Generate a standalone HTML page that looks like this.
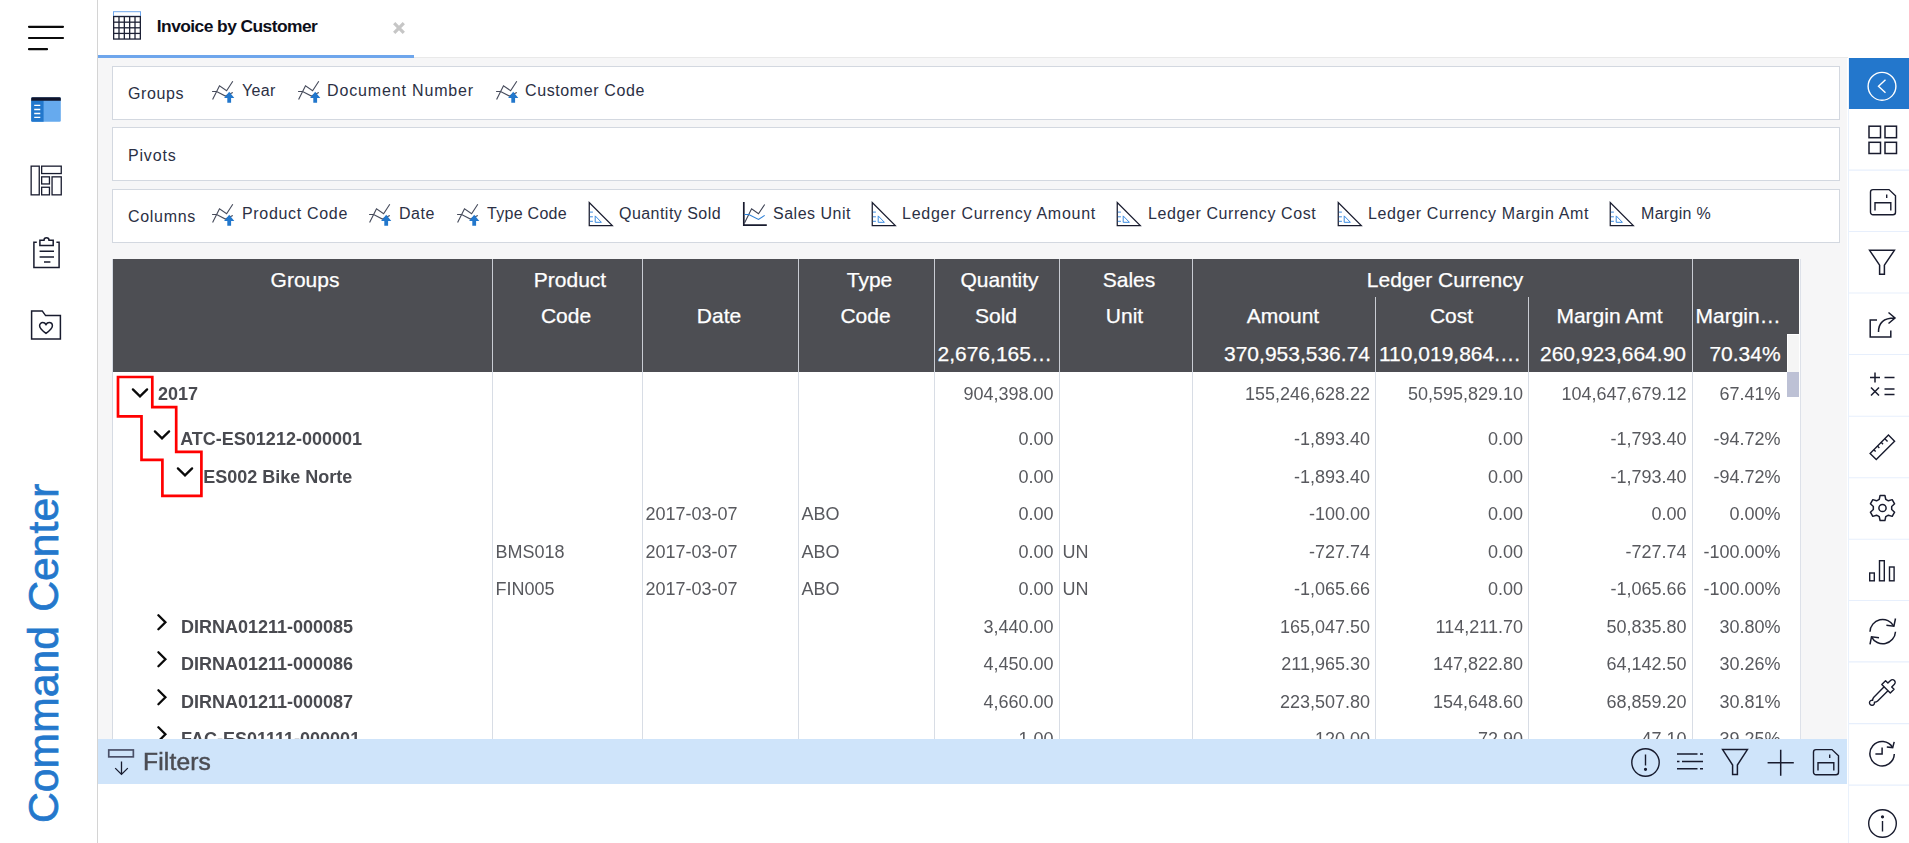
<!DOCTYPE html>
<html lang="en"><head><meta charset="utf-8"><title>Invoice by Customer</title>
<style>
html,body{margin:0;padding:0;}
body{width:1909px;height:843px;overflow:hidden;position:relative;background:#fff;font-family:"Liberation Sans",sans-serif;}
.r{position:absolute;display:block;}
.t{position:absolute;white-space:pre;display:block;}
#clip{position:absolute;left:113px;top:372px;width:1687px;height:367px;overflow:hidden;background:#fff;will-change:transform;}
</style></head><body>
<div class="r" style="left:98px;top:0px;width:1811px;height:58px;background:#fff;"></div>
<div class="r" style="left:98px;top:58px;width:1749px;height:681px;background:#f6f6f7;"></div>
<div class="r" style="left:98px;top:57px;width:1750px;height:1px;background:#e9e9e9;"></div>
<div class="r" style="left:98px;top:55px;width:316px;height:3px;background:#6ea6ec;"></div>
<div class="r" style="left:97px;top:0px;width:1px;height:843px;background:#d4d4d4;"></div>
<svg class="r" style="left:24px;top:20px;" width="44" height="36" viewBox="0 0 44 36" fill="none"><g stroke="#0b0b0b" stroke-width="2.200" stroke-linecap="round"><path d="M5 6.8H39M5 18H39M5 29.2H23"/></g></svg>
<svg class="r" style="left:30px;top:96px;" width="32" height="27" viewBox="0 0 32 27" fill="none"><rect x="1.200" y="1.200" width="29.600" height="24.500" rx="1.300" fill="#66aaee"/><path d="M1.200 4.500h12.400v21.200H2.500a1.300 1.300 0 0 1 -1.300 -1.300z" fill="#2277cc"/><path d="M1.200 2.500a1.300 1.300 0 0 1 1.300-1.300h27a1.300 1.300 0 0 1 1.300 1.300v2.300H1.200z" fill="#11142a"/><path d="M4.200 9.400h6.100M4.200 13.500h6.100M4.200 17.500h6.100M4.200 21.400h6.100" stroke="#fff" stroke-width="1.300"/></svg>
<svg class="r" style="left:29px;top:164px;" width="34" height="33" viewBox="0 0 34 33" fill="none"><g stroke="#181b2e" stroke-width="1.300"><rect x="2.150" y="2.150" width="8.100" height="28.700"/><rect x="12.650" y="2.150" width="19.600" height="7.400"/><rect x="12.650" y="12.850" width="7.800" height="7.100"/><rect x="12.650" y="23.250" width="7.800" height="7.600"/><rect x="23.050" y="12.850" width="9.200" height="18"/></g></svg>
<svg class="r" style="left:31px;top:235px;" width="31" height="35" viewBox="0 0 31 35" fill="none"><g stroke="#181b2e" stroke-width="1.5"><path d="M5.800 7.200H2.900V32.400H28.100V7.200H25.400"/><path d="M8.900 5.200h4.100a2.500 2.500 0 0 1 5 0h4.200v5.400H8.900z"/><path d="M8.6 16.2h14.4M8.6 22h14.4M13 26.9h6.4"/></g></svg>
<svg class="r" style="left:29px;top:308px;" width="34" height="34" viewBox="0 0 34 34" fill="none"><g stroke="#181b2e" stroke-width="1.5"><path d="M2.6 2.9H13.2L16.6 7.6H31.4V31.1H2.6z"/><path d="M17 25.4c-3-2.2-6.4-4.7-6.4-7.6 0-1.9 1.4-3.3 3.2-3.3 1.4 0 2.5.8 3.2 2 .7-1.2 1.8-2 3.2-2 1.8 0 3.2 1.4 3.2 3.3 0 2.9-3.4 5.400-6.4 7.6z"/></g></svg>
<div class="t" style="left:0;top:0;width:0;height:0;"><span class="t" style="left:65px;top:822.5px;transform-origin:0 0;transform:rotate(-90deg) translate(0,-100%);font-size:42.700px;line-height:43px;word-spacing:2.500px;color:#2478cc;-webkit-text-stroke:0.7px #2478cc;letter-spacing:0px;">Command Center</span></div>
<svg class="r" style="left:113px;top:11px;" width="28" height="29" viewBox="0 0 28 29" fill="none"><rect x="0.500" y="0.700" width="27" height="4.600" stroke="#6ea6ec" stroke-width="1" fill="#fff"/><rect x="0" y="4.900" width="28" height="23.800" fill="#1d2135"/><rect x="1.30" y="6.20" width="4.040" height="4.325" fill="#fff"/><rect x="6.64" y="6.20" width="4.040" height="4.325" fill="#fff"/><rect x="11.98" y="6.20" width="4.040" height="4.325" fill="#fff"/><rect x="17.32" y="6.20" width="4.040" height="4.325" fill="#fff"/><rect x="22.66" y="6.20" width="4.040" height="4.325" fill="#fff"/><rect x="1.30" y="11.82" width="4.040" height="4.325" fill="#fff"/><rect x="6.64" y="11.82" width="4.040" height="4.325" fill="#fff"/><rect x="11.98" y="11.82" width="4.040" height="4.325" fill="#fff"/><rect x="17.32" y="11.82" width="4.040" height="4.325" fill="#fff"/><rect x="22.66" y="11.82" width="4.040" height="4.325" fill="#fff"/><rect x="1.30" y="17.45" width="4.040" height="4.325" fill="#fff"/><rect x="6.64" y="17.45" width="4.040" height="4.325" fill="#fff"/><rect x="11.98" y="17.45" width="4.040" height="4.325" fill="#fff"/><rect x="17.32" y="17.45" width="4.040" height="4.325" fill="#fff"/><rect x="22.66" y="17.45" width="4.040" height="4.325" fill="#fff"/><rect x="1.30" y="23.07" width="4.040" height="4.325" fill="#fff"/><rect x="6.64" y="23.07" width="4.040" height="4.325" fill="#fff"/><rect x="11.98" y="23.07" width="4.040" height="4.325" fill="#fff"/><rect x="17.32" y="23.07" width="4.040" height="4.325" fill="#fff"/><rect x="22.66" y="23.07" width="4.040" height="4.325" fill="#fff"/></svg>
<span class="t" style="top:18.27px;font-size:17.4px;line-height:17.4px;color:#0e0f1a;font-weight:700;letter-spacing:-0.560px;left:156.80px;">Invoice by Customer</span>
<svg class="r" style="left:392px;top:21px;" width="14" height="14" viewBox="0 0 14 14" fill="none"><path d="M2.2 2.2L11.8 11.800M11.8 2.2L2.2 11.800" stroke="#c6c6c6" stroke-width="3.2"/></svg>
<div class="r" style="left:112px;top:66px;width:1726px;height:52px;background:#fff;border:1px solid #d3d8e0;"></div>
<div class="r" style="left:112px;top:127px;width:1726px;height:52px;background:#fff;border:1px solid #d3d8e0;"></div>
<div class="r" style="left:112px;top:189px;width:1726px;height:52px;background:#fff;border:1px solid #d3d8e0;"></div>
<span class="t" style="top:86.46px;font-size:16px;line-height:16px;color:#2b3044;letter-spacing:0.588px;left:128.00px;">Groups</span>
<span class="t" style="top:148.46px;font-size:16px;line-height:16px;color:#2b3044;letter-spacing:0.822px;left:128.00px;">Pivots</span>
<span class="t" style="top:209.46px;font-size:16px;line-height:16px;color:#2b3044;letter-spacing:0.695px;left:128.00px;">Columns</span>
<svg class="r" style="left:212px;top:79.8px;" width="24" height="24" viewBox="0 0 24 24" fill="none"><g stroke="#474c5c" stroke-width="1.15" fill="none"><path d="M0.6 19.5L7.5 5.8L14.6 10.700L20.800 1.3"/><path d="M0.1 11.5H4.6L13.4 16L20.800 12.4"/></g><path d="M17.2 11.700L22.3 18.1H19.1V22.800H15.300V18.1H12.100z" fill="#2277cc"/></svg>
<span class="t" style="top:83.46px;font-size:16px;line-height:16px;color:#2b3044;letter-spacing:0.293px;left:242.00px;">Year</span>
<svg class="r" style="left:297.5px;top:79.8px;" width="24" height="24" viewBox="0 0 24 24" fill="none"><g stroke="#474c5c" stroke-width="1.15" fill="none"><path d="M0.6 19.5L7.5 5.8L14.6 10.700L20.800 1.3"/><path d="M0.1 11.5H4.6L13.4 16L20.800 12.4"/></g><path d="M17.2 11.700L22.3 18.1H19.1V22.800H15.300V18.1H12.100z" fill="#2277cc"/></svg>
<span class="t" style="top:83.46px;font-size:16px;line-height:16px;color:#2b3044;letter-spacing:0.848px;left:327.00px;">Document Number</span>
<svg class="r" style="left:495.5px;top:79.8px;" width="24" height="24" viewBox="0 0 24 24" fill="none"><g stroke="#474c5c" stroke-width="1.15" fill="none"><path d="M0.6 19.5L7.5 5.8L14.6 10.700L20.800 1.3"/><path d="M0.1 11.5H4.6L13.4 16L20.800 12.4"/></g><path d="M17.2 11.700L22.3 18.1H19.1V22.800H15.300V18.1H12.100z" fill="#2277cc"/></svg>
<span class="t" style="top:83.46px;font-size:16px;line-height:16px;color:#2b3044;letter-spacing:0.612px;left:525.00px;">Customer Code</span>
<svg class="r" style="left:212px;top:203.2px;" width="24" height="24" viewBox="0 0 24 24" fill="none"><g stroke="#474c5c" stroke-width="1.15" fill="none"><path d="M0.6 19.5L7.5 5.8L14.6 10.700L20.800 1.3"/><path d="M0.1 11.5H4.6L13.4 16L20.800 12.4"/></g><path d="M17.2 11.700L22.3 18.1H19.1V22.800H15.300V18.1H12.100z" fill="#2277cc"/></svg>
<span class="t" style="top:206.46px;font-size:16px;line-height:16px;color:#2b3044;letter-spacing:0.680px;left:242.00px;">Product Code</span>
<svg class="r" style="left:369px;top:203.2px;" width="24" height="24" viewBox="0 0 24 24" fill="none"><g stroke="#474c5c" stroke-width="1.15" fill="none"><path d="M0.6 19.5L7.5 5.8L14.6 10.700L20.800 1.3"/><path d="M0.1 11.5H4.6L13.4 16L20.800 12.4"/></g><path d="M17.2 11.700L22.3 18.1H19.1V22.800H15.300V18.1H12.100z" fill="#2277cc"/></svg>
<span class="t" style="top:206.46px;font-size:16px;line-height:16px;color:#2b3044;letter-spacing:0.551px;left:399.00px;">Date</span>
<svg class="r" style="left:457px;top:203.2px;" width="24" height="24" viewBox="0 0 24 24" fill="none"><g stroke="#474c5c" stroke-width="1.15" fill="none"><path d="M0.6 19.5L7.5 5.8L14.6 10.700L20.800 1.3"/><path d="M0.1 11.5H4.6L13.4 16L20.800 12.4"/></g><path d="M17.2 11.700L22.3 18.1H19.1V22.800H15.300V18.1H12.100z" fill="#2277cc"/></svg>
<span class="t" style="top:206.46px;font-size:16px;line-height:16px;color:#2b3044;letter-spacing:0.291px;left:487.00px;">Type Code</span>
<svg class="r" style="left:588px;top:201px;" width="26" height="27" viewBox="0 0 26 27" fill="none"><path d="M1.25 1.6V24.600H24.300z" stroke="#181b2e" stroke-width="1.25" fill="#fff" stroke-linejoin="miter"/><path d="M7.2 14.9V21.300H13.400z" stroke="#3b8be0" stroke-width="1" fill="none"/><path d="M1.9 11.100H4.900M1.900 15.800H4.900M1.900 20.300H4.900" stroke="#3b8be0" stroke-width="1"/></svg>
<span class="t" style="top:206.46px;font-size:16px;line-height:16px;color:#2b3044;letter-spacing:0.457px;left:619.00px;">Quantity Sold</span>
<svg class="r" style="left:742px;top:202px;" width="26" height="26" viewBox="0 0 26 26" fill="none"><path d="M1.8 0.1V23.100H24.800" stroke="#181b2e" stroke-width="1.7" fill="none"/><path d="M2.5 21L9.600 6.800L16.500 11.700L22.700 2.500" stroke="#3c4052" stroke-width="1.1" fill="none"/><path d="M2.5 12.500H6.800L16.500 17.400L22.700 13.400" stroke="#2b7fd6" stroke-width="1.1" fill="none"/></svg>
<span class="t" style="top:206.46px;font-size:16px;line-height:16px;color:#2b3044;letter-spacing:0.508px;left:773.00px;">Sales Unit</span>
<svg class="r" style="left:871px;top:201px;" width="26" height="27" viewBox="0 0 26 27" fill="none"><path d="M1.25 1.6V24.600H24.300z" stroke="#181b2e" stroke-width="1.25" fill="#fff" stroke-linejoin="miter"/><path d="M7.2 14.9V21.300H13.400z" stroke="#3b8be0" stroke-width="1" fill="none"/><path d="M1.9 11.100H4.900M1.900 15.800H4.900M1.900 20.300H4.900" stroke="#3b8be0" stroke-width="1"/></svg>
<span class="t" style="top:206.46px;font-size:16px;line-height:16px;color:#2b3044;letter-spacing:0.733px;left:902.00px;">Ledger Currency Amount</span>
<svg class="r" style="left:1116px;top:201px;" width="26" height="27" viewBox="0 0 26 27" fill="none"><path d="M1.25 1.6V24.600H24.300z" stroke="#181b2e" stroke-width="1.25" fill="#fff" stroke-linejoin="miter"/><path d="M7.2 14.9V21.300H13.400z" stroke="#3b8be0" stroke-width="1" fill="none"/><path d="M1.9 11.100H4.900M1.900 15.800H4.900M1.900 20.300H4.900" stroke="#3b8be0" stroke-width="1"/></svg>
<span class="t" style="top:206.46px;font-size:16px;line-height:16px;color:#2b3044;letter-spacing:0.589px;left:1148.00px;">Ledger Currency Cost</span>
<svg class="r" style="left:1337px;top:201px;" width="26" height="27" viewBox="0 0 26 27" fill="none"><path d="M1.25 1.6V24.600H24.300z" stroke="#181b2e" stroke-width="1.25" fill="#fff" stroke-linejoin="miter"/><path d="M7.2 14.9V21.300H13.400z" stroke="#3b8be0" stroke-width="1" fill="none"/><path d="M1.9 11.100H4.900M1.900 15.800H4.900M1.900 20.300H4.900" stroke="#3b8be0" stroke-width="1"/></svg>
<span class="t" style="top:206.46px;font-size:16px;line-height:16px;color:#2b3044;letter-spacing:0.633px;left:1368.00px;">Ledger Currency Margin Amt</span>
<svg class="r" style="left:1609px;top:201px;" width="26" height="27" viewBox="0 0 26 27" fill="none"><path d="M1.25 1.6V24.600H24.300z" stroke="#181b2e" stroke-width="1.25" fill="#fff" stroke-linejoin="miter"/><path d="M7.2 14.9V21.300H13.400z" stroke="#3b8be0" stroke-width="1" fill="none"/><path d="M1.9 11.100H4.900M1.900 15.800H4.900M1.900 20.300H4.900" stroke="#3b8be0" stroke-width="1"/></svg>
<span class="t" style="top:206.46px;font-size:16px;line-height:16px;color:#2b3044;letter-spacing:0.303px;left:1641.00px;">Margin %</span>
<div class="r" style="left:112px;top:259px;width:1px;height:480px;background:#d6dbe3;"></div>
<div class="r" style="left:113px;top:259px;width:1686px;height:113px;background:#4d4e53;"></div>
<div class="r" style="left:1799px;top:259px;width:1px;height:480px;background:#fff;"></div>
<div class="r" style="left:1800px;top:259px;width:1px;height:480px;background:#dde1e9;"></div>
<div id="clip">
<div class="r" style="left:379px;top:0px;width:1px;height:367px;background:#d8dde5;"></div>
<div class="r" style="left:529px;top:0px;width:1px;height:367px;background:#d8dde5;"></div>
<div class="r" style="left:685px;top:0px;width:1px;height:367px;background:#d8dde5;"></div>
<div class="r" style="left:821px;top:0px;width:1px;height:367px;background:#d8dde5;"></div>
<div class="r" style="left:946px;top:0px;width:1px;height:367px;background:#d8dde5;"></div>
<div class="r" style="left:1079px;top:0px;width:1px;height:367px;background:#d8dde5;"></div>
<div class="r" style="left:1262px;top:0px;width:1px;height:367px;background:#d8dde5;"></div>
<div class="r" style="left:1415px;top:0px;width:1px;height:367px;background:#d8dde5;"></div>
<div class="r" style="left:1579px;top:0px;width:1px;height:367px;background:#d8dde5;"></div>
<span class="t" style="top:12.76px;font-size:18px;line-height:18px;color:#494a50;font-weight:700;left:45.00px;">2017</span>
<span class="t" style="top:12.76px;font-size:18px;line-height:18px;color:#58595e;left:850.51px;">904,398.00</span>
<span class="t" style="top:12.76px;font-size:18px;line-height:18px;color:#58595e;left:1131.88px;">155,246,628.22</span>
<span class="t" style="top:12.76px;font-size:18px;line-height:18px;color:#58595e;left:1294.89px;">50,595,829.10</span>
<span class="t" style="top:12.76px;font-size:18px;line-height:18px;color:#58595e;left:1448.48px;">104,647,679.12</span>
<span class="t" style="top:12.76px;font-size:18px;line-height:18px;color:#58595e;left:1606.55px;">67.41%</span>
<span class="t" style="top:57.76px;font-size:18px;line-height:18px;color:#494a50;font-weight:700;left:67.20px;">ATC-ES01212-000001</span>
<span class="t" style="top:57.76px;font-size:18px;line-height:18px;color:#58595e;left:905.57px;">0.00</span>
<span class="t" style="top:57.76px;font-size:18px;line-height:18px;color:#58595e;left:1180.94px;">-1,893.40</span>
<span class="t" style="top:57.76px;font-size:18px;line-height:18px;color:#58595e;left:1374.97px;">0.00</span>
<span class="t" style="top:57.76px;font-size:18px;line-height:18px;color:#58595e;left:1497.54px;">-1,793.40</span>
<span class="t" style="top:57.76px;font-size:18px;line-height:18px;color:#58595e;left:1600.56px;">-94.72%</span>
<span class="t" style="top:95.76px;font-size:18px;line-height:18px;color:#494a50;font-weight:700;left:90.20px;">ES002 Bike Norte</span>
<span class="t" style="top:95.76px;font-size:18px;line-height:18px;color:#58595e;left:905.57px;">0.00</span>
<span class="t" style="top:95.76px;font-size:18px;line-height:18px;color:#58595e;left:1180.94px;">-1,893.40</span>
<span class="t" style="top:95.76px;font-size:18px;line-height:18px;color:#58595e;left:1374.97px;">0.00</span>
<span class="t" style="top:95.76px;font-size:18px;line-height:18px;color:#58595e;left:1497.54px;">-1,793.40</span>
<span class="t" style="top:95.76px;font-size:18px;line-height:18px;color:#58595e;left:1600.56px;">-94.72%</span>
<span class="t" style="top:132.76px;font-size:18px;line-height:18px;color:#58595e;left:532.50px;">2017-03-07</span>
<span class="t" style="top:132.76px;font-size:18px;line-height:18px;color:#58595e;left:688.50px;">ABO</span>
<span class="t" style="top:132.76px;font-size:18px;line-height:18px;color:#58595e;left:905.57px;">0.00</span>
<span class="t" style="top:132.76px;font-size:18px;line-height:18px;color:#58595e;left:1195.95px;">-100.00</span>
<span class="t" style="top:132.76px;font-size:18px;line-height:18px;color:#58595e;left:1374.97px;">0.00</span>
<span class="t" style="top:132.76px;font-size:18px;line-height:18px;color:#58595e;left:1538.57px;">0.00</span>
<span class="t" style="top:132.76px;font-size:18px;line-height:18px;color:#58595e;left:1616.56px;">0.00%</span>
<span class="t" style="top:170.76px;font-size:18px;line-height:18px;color:#58595e;left:382.50px;">BMS018</span>
<span class="t" style="top:170.76px;font-size:18px;line-height:18px;color:#58595e;left:532.50px;">2017-03-07</span>
<span class="t" style="top:170.76px;font-size:18px;line-height:18px;color:#58595e;left:688.50px;">ABO</span>
<span class="t" style="top:170.76px;font-size:18px;line-height:18px;color:#58595e;left:905.57px;">0.00</span>
<span class="t" style="top:170.76px;font-size:18px;line-height:18px;color:#58595e;left:949.50px;">UN</span>
<span class="t" style="top:170.76px;font-size:18px;line-height:18px;color:#58595e;left:1195.95px;">-727.74</span>
<span class="t" style="top:170.76px;font-size:18px;line-height:18px;color:#58595e;left:1374.97px;">0.00</span>
<span class="t" style="top:170.76px;font-size:18px;line-height:18px;color:#58595e;left:1512.55px;">-727.74</span>
<span class="t" style="top:170.76px;font-size:18px;line-height:18px;color:#58595e;left:1590.55px;">-100.00%</span>
<span class="t" style="top:207.76px;font-size:18px;line-height:18px;color:#58595e;left:382.50px;">FIN005</span>
<span class="t" style="top:207.76px;font-size:18px;line-height:18px;color:#58595e;left:532.50px;">2017-03-07</span>
<span class="t" style="top:207.76px;font-size:18px;line-height:18px;color:#58595e;left:688.50px;">ABO</span>
<span class="t" style="top:207.76px;font-size:18px;line-height:18px;color:#58595e;left:905.57px;">0.00</span>
<span class="t" style="top:207.76px;font-size:18px;line-height:18px;color:#58595e;left:949.50px;">UN</span>
<span class="t" style="top:207.76px;font-size:18px;line-height:18px;color:#58595e;left:1180.94px;">-1,065.66</span>
<span class="t" style="top:207.76px;font-size:18px;line-height:18px;color:#58595e;left:1374.97px;">0.00</span>
<span class="t" style="top:207.76px;font-size:18px;line-height:18px;color:#58595e;left:1497.54px;">-1,065.66</span>
<span class="t" style="top:207.76px;font-size:18px;line-height:18px;color:#58595e;left:1590.55px;">-100.00%</span>
<span class="t" style="top:245.76px;font-size:18px;line-height:18px;color:#494a50;font-weight:700;left:68.00px;">DIRNA01211-000085</span>
<svg class="r" style="left:41px;top:240px;" width="16" height="22" viewBox="0 0 16 22" fill="none"><path d="M4.400 3.300L11.400 10.300L4.400 17.300" stroke="#0a0a0a" stroke-width="2.300" stroke-linecap="round"/></svg>
<span class="t" style="top:245.76px;font-size:18px;line-height:18px;color:#58595e;left:870.53px;">3,440.00</span>
<span class="t" style="top:245.76px;font-size:18px;line-height:18px;color:#58595e;left:1166.91px;">165,047.50</span>
<span class="t" style="top:245.76px;font-size:18px;line-height:18px;color:#58595e;left:1322.58px;">114,211.70</span>
<span class="t" style="top:245.76px;font-size:18px;line-height:18px;color:#58595e;left:1493.52px;">50,835.80</span>
<span class="t" style="top:245.76px;font-size:18px;line-height:18px;color:#58595e;left:1606.55px;">30.80%</span>
<span class="t" style="top:282.76px;font-size:18px;line-height:18px;color:#494a50;font-weight:700;left:68.00px;">DIRNA01211-000086</span>
<svg class="r" style="left:41px;top:277px;" width="16" height="22" viewBox="0 0 16 22" fill="none"><path d="M4.400 3.300L11.400 10.300L4.400 17.300" stroke="#0a0a0a" stroke-width="2.300" stroke-linecap="round"/></svg>
<span class="t" style="top:282.76px;font-size:18px;line-height:18px;color:#58595e;left:870.53px;">4,450.00</span>
<span class="t" style="top:282.76px;font-size:18px;line-height:18px;color:#58595e;left:1168.25px;">211,965.30</span>
<span class="t" style="top:282.76px;font-size:18px;line-height:18px;color:#58595e;left:1319.91px;">147,822.80</span>
<span class="t" style="top:282.76px;font-size:18px;line-height:18px;color:#58595e;left:1493.52px;">64,142.50</span>
<span class="t" style="top:282.76px;font-size:18px;line-height:18px;color:#58595e;left:1606.55px;">30.26%</span>
<span class="t" style="top:320.76px;font-size:18px;line-height:18px;color:#494a50;font-weight:700;left:68.00px;">DIRNA01211-000087</span>
<svg class="r" style="left:41px;top:315px;" width="16" height="22" viewBox="0 0 16 22" fill="none"><path d="M4.400 3.300L11.400 10.300L4.400 17.300" stroke="#0a0a0a" stroke-width="2.300" stroke-linecap="round"/></svg>
<span class="t" style="top:320.76px;font-size:18px;line-height:18px;color:#58595e;left:870.53px;">4,660.00</span>
<span class="t" style="top:320.76px;font-size:18px;line-height:18px;color:#58595e;left:1166.91px;">223,507.80</span>
<span class="t" style="top:320.76px;font-size:18px;line-height:18px;color:#58595e;left:1319.91px;">154,648.60</span>
<span class="t" style="top:320.76px;font-size:18px;line-height:18px;color:#58595e;left:1493.52px;">68,859.20</span>
<span class="t" style="top:320.76px;font-size:18px;line-height:18px;color:#58595e;left:1606.55px;">30.81%</span>
<span class="t" style="top:357.76px;font-size:18px;line-height:18px;color:#494a50;font-weight:700;left:68.00px;">FAC-ES01111-000001</span>
<svg class="r" style="left:41px;top:352px;" width="16" height="22" viewBox="0 0 16 22" fill="none"><path d="M4.400 3.300L11.400 10.300L4.400 17.300" stroke="#0a0a0a" stroke-width="2.300" stroke-linecap="round"/></svg>
<span class="t" style="top:357.76px;font-size:18px;line-height:18px;color:#58595e;left:905.57px;">1.00</span>
<span class="t" style="top:357.76px;font-size:18px;line-height:18px;color:#58595e;left:1201.95px;">120.00</span>
<span class="t" style="top:357.76px;font-size:18px;line-height:18px;color:#58595e;left:1364.96px;">72.90</span>
<span class="t" style="top:357.76px;font-size:18px;line-height:18px;color:#58595e;left:1528.56px;">47.10</span>
<span class="t" style="top:357.76px;font-size:18px;line-height:18px;color:#58595e;left:1606.55px;">39.25%</span>
<svg class="r" style="left:15.5px;top:14px;" width="22" height="14" viewBox="0 0 22 14" fill="none"><path d="M3.900 3.400L11 10.400L18.100 3.400" stroke="#0a0a0a" stroke-width="2.300" stroke-linecap="round"/></svg>
<svg class="r" style="left:38.30000000000001px;top:55.69999999999999px;" width="22" height="14" viewBox="0 0 22 14" fill="none"><path d="M3.900 3.400L11 10.400L18.100 3.400" stroke="#0a0a0a" stroke-width="2.300" stroke-linecap="round"/></svg>
<svg class="r" style="left:60.69999999999999px;top:93px;" width="22" height="14" viewBox="0 0 22 14" fill="none"><path d="M3.900 3.400L11 10.400L18.100 3.400" stroke="#0a0a0a" stroke-width="2.300" stroke-linecap="round"/></svg>
<svg class="r" style="left:0px;top:0px;" width="120" height="140" viewBox="0 0 120 140" fill="none"><path d="M5.0 5.0L39.3 5.0L39.3 35.2L63.2 35.2L63.2 79.8L88.4 79.8L88.4 123.8L49.4 123.8L49.4 87.8L28.5 87.8L28.5 44.4L5.0 44.4z" stroke="#f00" stroke-width="2.7" stroke-linejoin="miter"/></svg>
<div class="r" style="left:1674px;top:0px;width:12px;height:25px;background:#bdc1d5;"></div>
</div>
<div class="r" style="left:492px;top:259px;width:1px;height:113px;background:#c9ccd3;"></div>
<div class="r" style="left:642px;top:259px;width:1px;height:113px;background:#c9ccd3;"></div>
<div class="r" style="left:798px;top:259px;width:1px;height:113px;background:#c9ccd3;"></div>
<div class="r" style="left:934px;top:259px;width:1px;height:113px;background:#c9ccd3;"></div>
<div class="r" style="left:1059px;top:259px;width:1px;height:113px;background:#c9ccd3;"></div>
<div class="r" style="left:1192px;top:259px;width:1px;height:113px;background:#c9ccd3;"></div>
<div class="r" style="left:1692px;top:259px;width:1px;height:113px;background:#c9ccd3;"></div>
<div class="r" style="left:1375px;top:297px;width:1px;height:75px;background:#c9ccd3;"></div>
<div class="r" style="left:1528px;top:297px;width:1px;height:75px;background:#c9ccd3;"></div>
<div class="r" style="left:1787px;top:334px;width:12px;height:38px;background:#fff;"></div>
<div class="r" style="left:1788px;top:335px;width:11px;height:37px;background:#f5f5f5;"></div>
<span class="t" style="top:269.22px;font-size:21px;line-height:21px;color:#fff;left:270.57px;-webkit-text-stroke:0.250px #fff;">Groups</span>
<span class="t" style="top:269.22px;font-size:21px;line-height:21px;color:#fff;left:533.81px;-webkit-text-stroke:0.250px #fff;">Product</span>
<span class="t" style="top:305.22px;font-size:21px;line-height:21px;color:#fff;left:540.90px;-webkit-text-stroke:0.250px #fff;">Code</span>
<span class="t" style="top:305.22px;font-size:21px;line-height:21px;color:#fff;left:696.82px;-webkit-text-stroke:0.250px #fff;">Date</span>
<span class="t" style="top:269.22px;font-size:21px;line-height:21px;color:#fff;left:846.74px;-webkit-text-stroke:0.250px #fff;">Type</span>
<span class="t" style="top:305.22px;font-size:21px;line-height:21px;color:#fff;left:840.40px;-webkit-text-stroke:0.250px #fff;">Code</span>
<span class="t" style="top:269.22px;font-size:21px;line-height:21px;color:#fff;left:960.40px;-webkit-text-stroke:0.250px #fff;">Quantity</span>
<span class="t" style="top:305.22px;font-size:21px;line-height:21px;color:#fff;left:974.98px;-webkit-text-stroke:0.250px #fff;">Sold</span>
<span class="t" style="top:269.22px;font-size:21px;line-height:21px;color:#fff;left:1102.73px;-webkit-text-stroke:0.250px #fff;">Sales</span>
<span class="t" style="top:305.22px;font-size:21px;line-height:21px;color:#fff;left:1105.83px;-webkit-text-stroke:0.250px #fff;">Unit</span>
<span class="t" style="top:269.22px;font-size:21px;line-height:21px;color:#fff;left:1366.79px;-webkit-text-stroke:0.250px #fff;">Ledger Currency</span>
<span class="t" style="top:305.22px;font-size:21px;line-height:21px;color:#fff;left:1246.81px;-webkit-text-stroke:0.250px #fff;">Amount</span>
<span class="t" style="top:305.22px;font-size:21px;line-height:21px;color:#fff;left:1429.91px;-webkit-text-stroke:0.250px #fff;">Cost</span>
<span class="t" style="top:305.22px;font-size:21px;line-height:21px;color:#fff;left:1556.40px;-webkit-text-stroke:0.250px #fff;">Margin Amt</span>
<span class="t" style="top:305.22px;font-size:21px;line-height:21px;color:#fff;left:1695.50px;-webkit-text-stroke:0.250px #fff;">Margin…</span>
<span class="t" style="top:343.22px;font-size:21px;line-height:21px;color:#fff;left:937.50px;-webkit-text-stroke:0.250px #fff;">2,676,165…</span>
<span class="t" style="top:343.22px;font-size:21px;line-height:21px;color:#fff;left:1224.02px;-webkit-text-stroke:0.250px #fff;">370,953,536.74</span>
<span class="t" style="top:343.22px;font-size:21px;line-height:21px;color:#fff;left:1379.00px;-webkit-text-stroke:0.250px #fff;">110,019,864.…</span>
<span class="t" style="top:343.22px;font-size:21px;line-height:21px;color:#fff;left:1540.02px;-webkit-text-stroke:0.250px #fff;">260,923,664.90</span>
<span class="t" style="top:343.22px;font-size:21px;line-height:21px;color:#fff;left:1709.38px;-webkit-text-stroke:0.250px #fff;">70.34%</span>
<div class="r" style="left:98px;top:739px;width:1749px;height:45px;background:#cfe4fa;"></div>
<div class="r" style="left:98px;top:784px;width:1750px;height:59px;background:#fff;"></div>
<svg class="r" style="left:106px;top:748px;" width="30" height="28" viewBox="0 0 30 28" fill="none"><rect x="2.750" y="1.950" width="24.600" height="6.900" stroke="#4a5068" stroke-width="1.700"/><path d="M15.500 13.400V26.200M9.200 20.100L15.500 26.400L21.800 20.100" stroke="#181b2e" stroke-width="1.300"/></svg>
<span class="t" style="top:750.18px;font-size:24.6px;line-height:24.6px;color:#4b4c53;letter-spacing:0.148px;left:142.80px;-webkit-text-stroke:0.5px #4b4c53;will-change:transform;">Filters</span>
<svg class="r" style="left:1630px;top:747px;" width="32" height="32" viewBox="0 0 32 32" fill="none"><g stroke="#181b2e" stroke-width="1.4"><circle cx="15.500" cy="15.500" r="13.700"/><path d="M15.500 7.500V18.500"/><circle cx="15.500" cy="22.300" r="0.900" fill="#181b2e"/></g></svg>
<svg class="r" style="left:1675px;top:750px;" width="30" height="24" viewBox="0 0 30 24" fill="none"><g stroke="#181b2e" stroke-width="1.5"><path d="M2 4H22.500M25 4H28M2 11.500H4.500M7 11.500H28M2 18.800H22.500M25 18.800H28"/></g></svg>
<svg class="r" style="left:1720px;top:747px;" width="30" height="30" viewBox="0 0 30 30" fill="none"><path d="M2.600 2.600H27.400L17.400 18V27.500H12.600V18z" stroke="#181b2e" stroke-width="1.5"/></svg>
<svg class="r" style="left:1766px;top:748px;" width="30" height="30" viewBox="0 0 30 30" fill="none"><path d="M14.700 1.800V27.800M1.600 14.700H27.800" stroke="#181b2e" stroke-width="1.5"/></svg>
<svg class="r" style="left:1811.5px;top:748.2px;" width="28" height="29" viewBox="0 0 28 29" fill="none"><g stroke="#181b2e" stroke-width="1.400"><path d="M4 1.600H20L26.500 7.800V24.200a2.500 2.500 0 0 1 -2.500 2.500H4A2.500 2.500 0 0 1 1.500 24.200V4.100A2.500 2.500 0 0 1 4 1.600z"/><path d="M6 22.400V14.700H21.800V22.400M17.700 6.600V10"/></g></svg>
<div class="r" style="left:1848px;top:58px;width:61px;height:785px;background:#fff;"></div>
<div class="r" style="left:1848px;top:58px;width:1px;height:785px;background:#e9f1fc;"></div>
<svg class="r" style="left:1849px;top:0px;" width="60" height="843" viewBox="0 0 60 843" fill="none"><path d="M0 170.1H60" stroke="#e7effc" stroke-width="1.100"/><path d="M0 231.5H60" stroke="#e7effc" stroke-width="1.100"/><path d="M0 293H60" stroke="#e7effc" stroke-width="1.100"/><path d="M0 354.5H60" stroke="#e7effc" stroke-width="1.100"/><path d="M0 416.3H60" stroke="#e7effc" stroke-width="1.100"/><path d="M0 477.7H60" stroke="#e7effc" stroke-width="1.100"/><path d="M0 539.3H60" stroke="#e7effc" stroke-width="1.100"/><path d="M0 600.5H60" stroke="#e7effc" stroke-width="1.100"/><path d="M0 661.9H60" stroke="#e7effc" stroke-width="1.100"/><path d="M0 723.6H60" stroke="#e7effc" stroke-width="1.100"/><path d="M0 785.1H60" stroke="#e7effc" stroke-width="1.100"/></svg>
<div class="r" style="left:1849px;top:58px;width:60px;height:51px;background:#2377cc;"></div>
<svg class="r" style="left:1866px;top:70px;" width="32" height="32" viewBox="0 0 32 32" fill="none"><g stroke="#fff" stroke-width="1.4"><circle cx="16" cy="16.300" r="13.900"/><path d="M19.500 9.800L12.500 16.300L19.500 22.800"/></g></svg>
<svg class="r" style="left:1867px;top:124px;" width="32" height="32" viewBox="0 0 32 32" fill="none"><g stroke="#181b2e" stroke-width="1.5"><rect x="2" y="2.200" width="11.500" height="11.500"/><rect x="18" y="2.200" width="11.500" height="11.500"/><rect x="2" y="18.300" width="11.500" height="11.200"/><rect x="18" y="18.300" width="11.500" height="11.200"/></g></svg>
<svg class="r" style="left:1868.5px;top:187.5px;" width="28" height="29" viewBox="0 0 28 29" fill="none"><g stroke="#181b2e" stroke-width="1.400"><path d="M4 1.600H20L26.500 7.800V24.200a2.500 2.500 0 0 1 -2.500 2.500H4A2.500 2.500 0 0 1 1.500 24.200V4.100A2.500 2.500 0 0 1 4 1.600z"/><path d="M6 22.400V14.700H21.800V22.400M17.700 6.600V10"/></g></svg>
<svg class="r" style="left:1867px;top:248px;" width="30" height="30" viewBox="0 0 30 30" fill="none"><path d="M2.600 2.300H27.400L17.400 17.200V26.300H12.600V17.200z" stroke="#181b2e" stroke-width="1.5"/></svg>
<svg class="r" style="left:1867px;top:310px;" width="32" height="30" viewBox="0 0 32 30" fill="none"><g stroke="#181b2e" stroke-width="1.5"><path d="M10 10H3.200V27H23.800V20.500"/><path d="M11.500 22C11.500 13 17 8 27.500 8M21.500 2.500L28 8L21.500 13.500"/></g></svg>
<svg class="r" style="left:1867px;top:370px;" width="30" height="30" viewBox="0 0 30 30" fill="none"><g stroke="#181b2e" stroke-width="1.500"><path d="M3 7.500H13M8 2.500V12.500M17.500 7.500H27.500M4 17.500L12 25.500M12 17.500L4 25.500M17.500 19H27.500M17.500 24.500H27.500"/></g></svg>
<svg class="r" style="left:1867px;top:433px;" width="30" height="30" viewBox="0 0 30 30" fill="none"><g stroke="#181b2e" stroke-width="1.4" transform="rotate(-45 15.350 14.300)"><rect x="2.400" y="9.950" width="25.900" height="8.700"/><path d="M7.600 9.950V12.600M12.800 9.950V12.600M18 9.950V12.600M23.200 9.950V13.800"/></g></svg>
<svg class="r" style="left:1867px;top:493px;" width="30" height="30" viewBox="0 0 30 30" fill="none"><g stroke="#181b2e" stroke-width="1.5" stroke-linejoin="round"><path d="M12.26 6.28L13.10 2.43L17.90 2.43L18.74 6.28L21.43 7.83L25.19 6.64L27.59 10.79L24.67 13.45L24.67 16.55L27.59 19.21L25.19 23.36L21.43 22.17L18.74 23.72L17.90 27.57L13.10 27.57L12.26 23.72L9.57 22.17L5.81 23.36L3.41 19.21L6.33 16.55L6.33 13.45L3.41 10.79L5.81 6.64L9.57 7.83z"/><circle cx="15.500" cy="15" r="3.600"/></g></svg>
<svg class="r" style="left:1867px;top:558px;" width="30" height="26" viewBox="0 0 30 26" fill="none"><g stroke="#181b2e" stroke-width="1.4"><rect x="2.700" y="15" width="4.600" height="7.800"/><rect x="12.500" y="2.700" width="4.800" height="20.100"/><rect x="22.500" y="9" width="4.600" height="13.800"/></g></svg>
<svg class="r" style="left:1867px;top:616px;" width="32" height="32" viewBox="0 0 32 32" fill="none"><g stroke="#181b2e" stroke-width="1.5"><path d="M3 15.800A12.700 12.700 0 0 1 26.900 10.200M28.500 15.800A12.700 12.700 0 0 1 4.500 20.800"/><path d="M28.500 2.500L26.900 10.200L19.400 9.200M3 28.300L4.500 20.800L12 21.700"/></g></svg>
<svg class="r" style="left:1867px;top:677px;" width="32" height="32" viewBox="0 0 32 32" fill="none"><g stroke="#181b2e" stroke-width="1.4" stroke-linejoin="round" transform="translate(15.300 15.500) rotate(45) translate(0 -17.100)"><path d="M-6 6.500H-2.700V2.700a2.700 2.700 0 0 1 5.400 0V6.500H6V11.800H-6z"/><path d="M-2.700 11.800V26.400Q-2.700 28 -1.300 29.560A2.500 2.500 0 1 0 1.300 29.560Q2.700 28 2.700 26.400V11.800"/></g></svg>
<svg class="r" style="left:1867px;top:739px;" width="32" height="32" viewBox="0 0 32 32" fill="none"><g stroke="#181b2e" stroke-width="1.5"><path d="M27.300 15.100A12.200 12.200 0 1 1 25.670 8.600"/><path d="M27.200 2.900L25.670 8.600L19.800 8M15.100 8.400V15.100H8.400"/></g></svg>
<svg class="r" style="left:1866px;top:808px;" width="32" height="32" viewBox="0 0 32 32" fill="none"><g stroke="#181b2e" stroke-width="1.4"><circle cx="16.500" cy="15.500" r="13.800"/><path d="M16.500 13V23.500"/><circle cx="16.500" cy="8.800" r="0.900" fill="#181b2e"/></g></svg>
</body></html>
